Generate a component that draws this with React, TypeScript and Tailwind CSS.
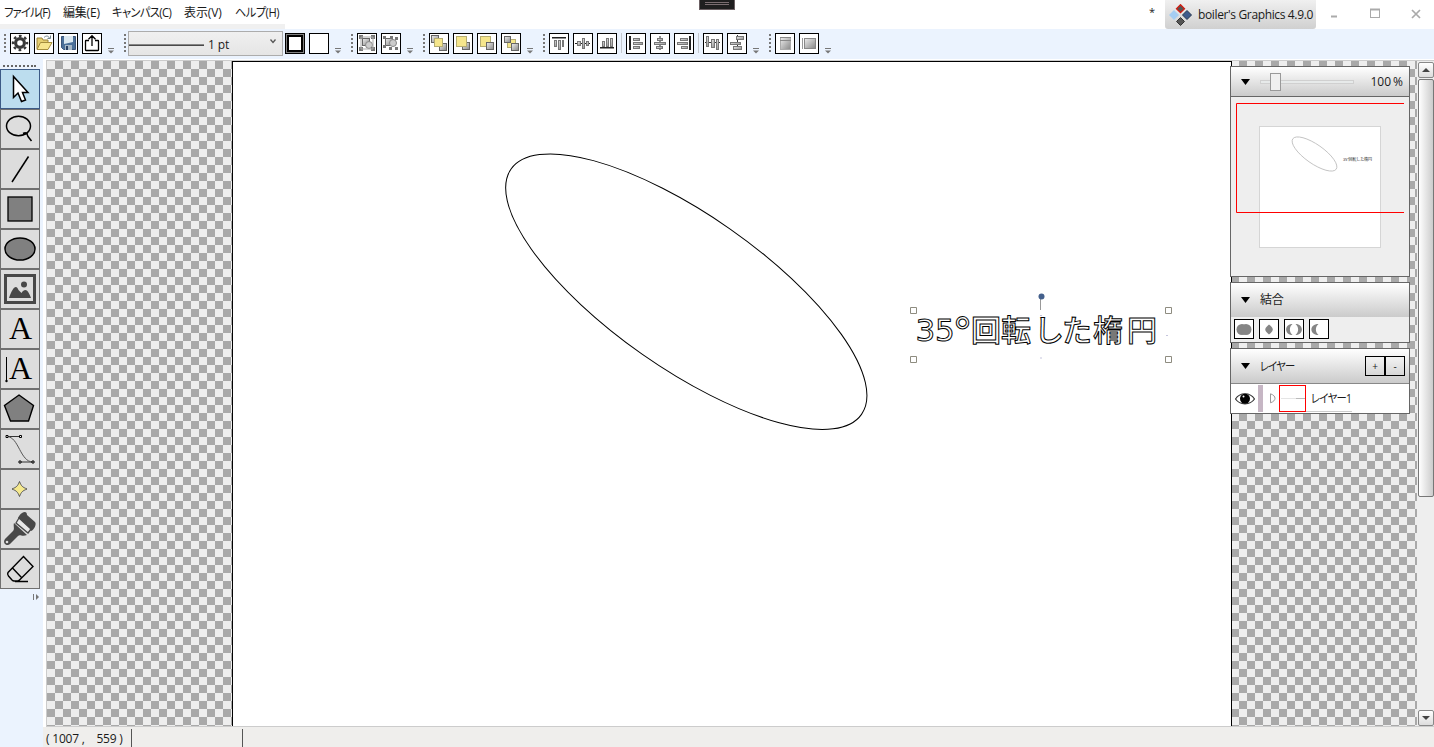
import type { ReactNode } from "react";

const FONT = "font-['Open_Sans','Noto_Sans_CJK_JP',sans-serif]";

function Handle() {
  return (
    <svg width="2" height="18" className="mr-[4px] shrink-0">
      {[0, 4, 8, 12, 16].map((y) => (
        <rect key={y} x="0" y={y} width="2" height="2" fill="#777" />
      ))}
    </svg>
  );
}

function Overflow() {
  return (
    <svg width="6" height="6" className="mt-[15px] ml-[6px] mr-[10px] shrink-0">
      <rect x="0" y="0" width="6" height="1" fill="#777" />
      <path d="M0 2.5h6l-3 3z" fill="#777" />
    </svg>
  );
}

function Btn({ children }: { children?: ReactNode }) {
  return (
    <button className="mr-[4px] flex h-[21px] w-5 shrink-0 items-center justify-center border border-black bg-white last:mr-0">
      <svg width="18" height="18" viewBox="0 0 18 18" className="shrink-0">{children}</svg>
    </button>
  );
}

function Group({ children }: { children: ReactNode }) {
  return (
    <div className="flex items-center">
      <Handle />
      <div className="flex items-center">{children}</div>
      <Overflow />
    </div>
  );
}

function Sep() {
  return <div className="mr-[4px] h-[20px] w-px bg-[#c4c8ce]" />;
}

function Box({ x, y, s = 7, y2 = false }: { x: number; y: number; s?: number; y2?: boolean }) {
  return <rect x={x + 0.5} y={y + 0.5} width={s} height={s} fill={y2 ? "#f5e68c" : "url(#gr)"} stroke={y2 ? "#b5ad72" : "#666"} />;
}

function Bars({ rects }: { rects: number[][] }) {
  return (
    <>
      {rects.map(([x, y, w, h], i) => (
        <rect key={i} x={x + 0.5} y={y + 0.5} width={w} height={h} fill="url(#gr)" stroke="#777" />
      ))}
    </>
  );
}

function TopToolbar() {
  return (
    <div className="flex h-[30px] items-center bg-[#ebf3fe] pb-[2px] pl-[4px]">
      <Group>
        <Btn>
          <g fill="none" stroke="#3a3a3a">
            <circle cx="9" cy="9" r="4.4" strokeWidth="3.2" />
            <circle cx="9" cy="9" r="7" strokeWidth="2.4" strokeDasharray="2.7 2.8" strokeDashoffset="1.35" />
          </g>
        </Btn>
        <Btn>
          <path d="M2 15V4h5l1 2h5v2" fill="#e6cf70" stroke="#9a843a" />
          <path d="M2 15.5l3.5-7H17l-4 7z" fill="#f7e58d" stroke="#a48d3d" />
          <path d="M9 3.5c2-2 4-2 5.5.5M15.500 1.500v3h-3" fill="none" stroke="#70868e" />
        </Btn>
        <Btn>
          <path d="M2.500 2.500h14v13h-12l-2-2z" fill="#4b7099" stroke="#3b557a" />
          <path d="M5 2h9v6l-9 2z" fill="#dbe8f0" />
          <rect x="6" y="11" width="7" height="5" fill="#a6b7c6" />
          <rect x="7" y="12" width="2" height="4" fill="#263f62" />
        </Btn>
        <Btn>
          <path d="M6 6.500H3q-.500 0-.500.500v9q0 .500.500.500h12q.500 0 .500-.500V7q0-.500-.500-.500H12M9 12V2M5.500 5.200L9 1.700l3.500 3.500" fill="none" stroke="#000" strokeWidth="1.300" />
        </Btn>
      </Group>
      <div className="flex items-center">
        <svg width="2" height="18" className="mr-[2px] shrink-0">
          {[0, 4, 8, 12, 16].map((y) => (
            <rect key={y} width="2" height="2" y={y} fill="#777" />
          ))}
        </svg>
        <div className="mr-[2px] flex h-[25px] w-[155px] items-center border border-[#acacac] bg-gradient-to-b from-[#f0f0f0] to-[#e5e5e5]">
          <svg width="75" height="2" className="mt-[4px]"><rect y=".5" width="75" height="1.300" fill="#222" /></svg>
          <span className="ml-[4px] mt-[3px] text-[12px] leading-4 tracking-[-0.100px]">1 pt</span>
          <svg width="6" height="5" className="mb-[3px] ml-auto mr-[6px]"><path d="M.5.500L3 3.500 5.500.500" fill="none" stroke="#555" strokeWidth="1.300" /></svg>
        </div>
        <button className="mr-[4px] flex h-[21px] w-5 items-center justify-center border border-black bg-[#808080] p-px">
          <span className="h-[17px] w-4 border-2 border-black bg-white" />
        </button>
        <Btn />
        <div className="-ml-[4px]"><Overflow /></div>
      </div>
      <Group>
        <Btn>
          <Box x={4} y={4} s={7} /><circle cx="11" cy="11" r="3.500" fill="#ccc" stroke="#888" />
          <path d="M1 1h4v4H1zM13 1h4v4h-4zM1 13h4v4H1zM13 13h4v4h-4z" fill="#777" /><path d="M3 3h12v12H3z" fill="none" stroke="#aaa" />
        </Btn>
        <Btn>
          <Box x={3} y={4} s={7} /><circle cx="11" cy="9" r="3.500" fill="#ccc" stroke="#888" />
          <path d="M1 2h3v3H1zM8 2h3v3H8zM1 11h3v3H1zM13 3h3v3h-3zM7 13h3v3H7zM13 13h3v3h-3z" fill="#777" />
        </Btn>
      </Group>
      <Group>
        <Btn><Box x={1} y={1} s={7} /><Box x={9} y={9} s={7} /><Box x={4} y={4} s={8} y2 /></Btn>
        <Btn><Box x={8} y={8} s={7} /><Box x={2} y={2} s={10} y2 /></Btn>
        <Btn><Box x={2} y={2} s={10} y2 /><Box x={8} y={8} s={7} /></Btn>
        <Btn><Box x={5} y={5} s={8} y2 /><Box x={2} y={2} s={6} /><Box x={9} y={9} s={7} /></Btn>
      </Group>
      <Group>
        <Btn><rect x="2" y="3" width="14" height="1.500" fill="#222" /><Bars rects={[[4, 6, 2, 6], [8, 6, 2, 9], [12, 6, 1, 6]]} /></Btn>
        <Btn><path d="M1 9.500h15" stroke="#222" /><Bars rects={[[3, 7, 3, 4], [8, 4, 2, 10], [12, 7, 2, 4]]} /></Btn>
        <Btn><rect x="2" y="13" width="14" height="1.500" fill="#222" /><Bars rects={[[4, 7, 2, 5], [8, 4, 2, 8], [12, 4, 2, 8]]} /></Btn>
        <Sep />
        <Btn><rect x="2" y="2" width="2" height="14" fill="#222" /><Bars rects={[[6, 4, 6, 2], [6, 8, 9, 2], [6, 12, 6, 2]]} /></Btn>
        <Btn><path d="M9 2v14" stroke="#222" /><Bars rects={[[6, 4, 5, 2], [3, 8, 11, 2], [5, 12, 6, 2]]} /></Btn>
        <Btn><rect x="14" y="2" width="2" height="14" fill="#222" /><Bars rects={[[5, 4, 7, 2], [2, 8, 10, 2], [6, 12, 6, 2]]} /></Btn>
        <Sep />
        <Btn><path d="M1 8.500h15" stroke="#333" /><Bars rects={[[2, 2, 2, 10], [7, 5, 3, 8], [12, 5, 2, 10]]} /></Btn>
        <Btn><path d="M9.500 1v15" stroke="#333" /><Bars rects={[[8, 2, 7, 3], [2, 8, 10, 2], [5, 12, 8, 3]]} /></Btn>
      </Group>
      <Group>
        <Btn><rect x="4.500" y="3.500" width="10" height="12" fill="url(#gr)" stroke="#aaa" /><path d="M4 3.500h11M4 6.500h11" stroke="#888" /></Btn>
        <Btn><rect x="4.500" y="4.500" width="11" height="10" fill="url(#gr)" stroke="#888" /><path d="M2.500 4v11" stroke="#999" /></Btn>
      </Group>
    </div>
  );
}

const tools: ReactNode[] = [
  <path d="M13.500 7.500v21l4.500-4.500 3.500 8.500 4-1.500-3-7.500h5.500z" fill="#fff" stroke="#000" strokeWidth="1.500" />,
  <g fill="none" stroke="#000" strokeWidth="1.500"><ellipse cx="18.500" cy="17" rx="12" ry="9.800" /><path d="M23 24.500c4-2 4 1 5 3l3.500 4.500M23 24.500l5 .500" /></g>,
  <path d="M12 33L28.500 7.500" stroke="#000" strokeWidth="1.500" />,
  <rect x="8" y="8" width="24" height="24" fill="#808080" stroke="#000" strokeWidth="1.300" />,
  <ellipse cx="20" cy="20" rx="15" ry="11" fill="#808080" stroke="#000" strokeWidth="1.500" />,
  <g><rect x="5.500" y="6.500" width="29" height="27" fill="none" stroke="#484848" strokeWidth="3" /><path d="M9 29c3-9 7-15 9.500-8l3 3c4-6 7-2 9.500 5z" fill="#484848" /><circle cx="24" cy="15.500" r="3" fill="#484848" /></g>,
  <text x="20.500" y="30" textAnchor="middle" fontSize="32" fontFamily="Liberation Serif, serif">A</text>,
  <g><text x="20.500" y="30" textAnchor="middle" fontSize="32" fontFamily="Liberation Serif, serif">A</text><path d="M6.500 8v25" stroke="#000" /><circle cx="6.500" cy="32" r="1.200" /></g>,
  <path d="M19 6l14.500 10.500L28.500 32h-18L4.500 16.500z" fill="#808080" stroke="#000" strokeWidth="1.400" />,
  <g fill="none" stroke="#333"><path d="M7 7.500h14M20 33h13" /><path d="M7 7.500C19 8 20 33 33 33" stroke="#555" /><path fill="#fff" stroke="#000" d="M6 6.500h2v2H6zM19.500 6.500h2v2h-2zM19 32h2v2h-2zM32 32h2v2h-2z" /></g>,
  <path d="M19.500 12.500c2 5 3 5.500 7.500 7.500-4.500 2-5.500 2.500-7.500 7.500-2-5-3-5.500-7.500-7.500 4.500-2 5.500-2.500 7.500-7.500z" fill="#f5e98e" stroke="#555" />,
  <g><path d="M22 4c3-2 5-1 5 2l8 7c2 2-1 8-4 9L18 9c1-2 2-4 4-5z" fill="#484848" /><path d="M19 9l12 11-3 4L16 14z" fill="#e8e8e8" stroke="#484848" strokeWidth="1.300" /><path d="M14 14l13 12c-5 2-7-1-9 1l-8 8c-3 3-8-1-5-5l8-8c2-2 0-5 1-8z" fill="#484848" /><circle cx="7" cy="33" r="1.300" fill="#ddd" /></g>,
  <path d="M23.500 7.500L33 17.500 19.500 31q-1 1-2 1H14q-1 0-2-1l-3.500-4q-1.500-2-.500-3.500zM12.500 19l9 9.500M15 32.500h13" fill="none" stroke="#000" strokeWidth="1.400" />,
];

function Toolbox() {
  return (
    <aside className="flex w-[43px] shrink-0 flex-col bg-[#ebf3fe]">
      <svg width="40" height="10" className="shrink-0">
        {[3, 7, 11, 15, 19, 23, 27, 31, 34].map((x) => (
          <rect key={x} x={x} y="6" width="2" height="2" fill="#666" />
        ))}
      </svg>
      {tools.map((t, i) => (
        <button key={i} className={`flex h-10 w-10 shrink-0 items-center justify-center border ${i === 0 ? "border-[#3c5a85] bg-[#bcddee]" : "border-[#707070] bg-[#dddddd]"}`}>
          <svg width="40" height="40" viewBox="0 0 40 40" className="shrink-0">{t}</svg>
        </button>
      ))}
      <svg width="8" height="7" className="ml-[32px] mt-[5px] shrink-0"><path d="M1.500 0v6" stroke="#777" /><path d="M4 0v6l3-3z" fill="#777" /></svg>
    </aside>
  );
}

const glyphs: [string, number][] = [["回", 971], ["転", 1001], ["し", 1034], ["た", 1062], ["楕", 1093], ["円", 1127]];

function Drawing() {
  return (
    <svg width="999" height="664" viewBox="233 62 999 664" className="block">
      <ellipse cx="686.300" cy="291.700" rx="213.900" ry="76.500" transform="rotate(35 686.300 291.700)" fill="none" stroke="#000" />
      <g fill="#fff" stroke="#000" strokeWidth="1" fontSize="30" opacity="0.99">
        <text y="340.500" fontSize="31" fontFamily="DejaVu Sans, sans-serif" x="915.500 935">35</text>
        <text x="952.500" y="347" fontSize="40" fontFamily="DejaVu Sans, sans-serif">°</text>
        {glyphs.map(([c, x]) => (
          <text key={c} x={x} y="340.500" fontFamily="Noto Sans CJK JP, sans-serif" fontWeight="500">{c}</text>
        ))}
      </g>
      <path d="M1040.500 299v11" stroke="#999" />
      <circle cx="1041.500" cy="296.500" r="3" fill="#44608c" />
      <path d="M910.500 307.500h6v6h-6zM1165.500 307.500h6v6h-6zM910.500 356.500h6v6h-6zM1165.500 356.500h6v6h-6z" fill="#fff" stroke="#8e8c80" />
      <path d="M1040 358h2M1166 335.500h2M1040 315.500h2" stroke="#c5c5dd" />
    </svg>
  );
}

function Tri() {
  return <svg width="9" height="6" className="ml-[10px] shrink-0"><path d="M0 0h9L4.500 6z" /></svg>;
}

const header = "flex items-center bg-gradient-to-b from-white to-[#cbcbcb]";

function Panels() {
  return (
    <div className="absolute top-[5px] left-[1183px] flex w-[180px] flex-col gap-[5px] text-[12px]">
      <section className="flex h-[211px] flex-col border border-[#666] bg-[#eee]">
        <div className={`${header} h-[30px] shrink-0 border-b border-[#666]`}>
          <Tri />
          <svg width="96" height="20" className="ml-[10px]">
            <rect x=".5" y="8.500" width="93" height="3" fill="#e7eaea" stroke="#d0d0d0" />
            <rect x="10.500" y="1.500" width="10" height="17" fill="#f0f0f0" stroke="#999" />
          </svg>
          <span className="ml-auto mr-[6px] tracking-[0.100px] [word-spacing:-1.500px]">100 %</span>
        </div>
        <svg width="178" height="179" className="shrink-0">
          <rect x="28.500" y="29.500" width="121" height="121" fill="#fff" stroke="#d5d5d5" />
          <ellipse cx="83.500" cy="57" rx="26.500" ry="9.500" transform="rotate(35 83.500 57)" fill="none" stroke="#bbb" strokeWidth=".8" />
          <text x="112" y="63.500" fontSize="4" fill="#222" textLength="29" fontFamily="Noto Sans CJK JP, sans-serif">35°回転した楕円</text>
          <path d="M173 6.500H5.500v109H173" fill="none" stroke="#f00" />
        </svg>
      </section>
      <section className="flex h-[61px] flex-col border border-[#666] bg-[#eee]">
        <div className={`${header} h-[34px] shrink-0`}><Tri /><span className="ml-[10px] tracking-[-0.300px]">結合</span></div>
        <div className="flex gap-[5px] pt-[2px] pl-[3px]">
          {[0, 1, 2, 3].map((i) => (
            <button key={i} className="h-5 w-5 border border-black bg-white">
              <svg width="18" height="18" fill="#858585">
                {i === 0 && <><circle cx="7" cy="9.500" r="5.500" /><circle cx="11" cy="9.500" r="5.500" /></>}
                {i === 1 && <path d="M9 4.500c5 4 5 6 0 10-5-4-5-6 0-10z" />}
                {i === 2 && <><path d="M7.500 4c-8.500 0-8.500 11 0 11-3.500-3-3.500-8 0-11z" /><path d="M10.500 4c8.500 0 8.500 11 0 11 3.500-3 3.500-8 0-11z" /></>}
                {i === 3 && <path d="M8.500 4c-9.500 0-9.500 11 0 11-3.500-3-3.500-8 0-11z" />}
              </svg>
            </button>
          ))}
        </div>
      </section>
      <section className="flex h-[66px] flex-col border border-[#666] bg-white">
        <div className={`${header} h-[35px] shrink-0 border-b border-[#888]`}>
          <Tri />
          <span className="ml-[10px] mt-[2px] inline-block w-[34px] origin-left scale-x-[0.860] tracking-[-1px] whitespace-nowrap [font-feature-settings:'palt']">レイヤー</span>
          <div className="ml-auto mr-[4px] flex text-[10px]">
            <button className="flex h-5 w-5 items-center justify-center border border-black">+</button>
            <button className="flex h-5 w-5 items-center justify-center border border-black">-</button>
          </div>
        </div>
        <div className="flex h-[29px] items-center">
          <svg width="20" height="14" className="ml-[4px] shrink-0"><path d="M.5 7C5 0 15 0 19.500 7 15 13.500 5 13.500.500 7z" fill="#fff" stroke="#333" strokeWidth="1.200" /><circle cx="10" cy="6.700" r="5" /><circle cx="8.500" cy="4.500" r="1" fill="#fff" /></svg>
          <div className="ml-[3px] h-[27px] w-[5px] bg-[#c6b6c4]" />
          <svg width="6" height="11" className="ml-[7px]"><path d="M.5.800v9c6-2 6-7 0-9z" fill="none" stroke="#999" /></svg>
          <div className="ml-[3px] flex h-[27px] w-[27px] shrink-0 items-center border border-[#f00] bg-white"><div className="ml-[1px] h-px w-[15px] bg-[#e5e5e5]" /><div className="h-px w-[9px] bg-[#bbb]" /></div>
          <div className="flex h-[27px] w-[46px] shrink-0 items-center border-b border-[#ccc] pl-[5px] whitespace-nowrap">
            <span className="mt-[2px] inline-block w-[40px] origin-left scale-x-[0.860] tracking-[-0.800px] [font-feature-settings:'palt']">レイヤー1</span>
          </div>
        </div>
      </section>
    </div>
  );
}

function ScrollButton({ up = false }: { up?: boolean }) {
  return (
    <div className="flex h-4 w-4 items-center justify-center rounded-[2px] border border-[#888] bg-gradient-to-b from-white to-[#ddd]">
      <svg width="8" height="4"><path d={up ? "M0 4h8L4 0z" : "M0 0h8L4 4z"} fill="#444" /></svg>
    </div>
  );
}

export default function App() {
  return (
    <div className={`flex h-[747px] w-[1434px] flex-col overflow-hidden bg-white text-[12px] text-[#1a1a1a] ${FONT}`} lang="ja">
      <svg width="0" height="0" className="absolute">
        <defs><linearGradient id="gr" x2="1" y2="1"><stop stopColor="#eee" /><stop offset="1" stopColor="#888" /></linearGradient></defs>
      </svg>
      <header className="relative flex h-[29px] shrink-0">
        <div className="flex w-[285px] flex-col justify-between">
          <nav className="flex h-6 items-center pt-[1px] pl-[4px] whitespace-nowrap [font-feature-settings:'palt']">
            <span className="w-[59px] origin-left scale-x-[0.940] tracking-[-0.900px]">ファイル(F)</span>
            <span className="w-[49px] tracking-[-0.200px]">編集(E)</span>
            <span className="w-[72px] origin-left scale-x-[0.940] tracking-[-0.700px]">キャンパス(C)</span>
            <span className="w-[51px] tracking-[-0.100px]">表示(V)</span>
            <span className="origin-left scale-x-[0.930] tracking-[-0.500px]">ヘルプ(H)</span>
          </nav>
          <div className="h-[5px] bg-[#f0f0f0]" />
        </div>
        <div className="absolute top-0 left-[699px] flex h-[10px] w-[36px] flex-col items-center gap-px border-x border-b border-[#6b6063] bg-[#1f1f1f] pt-[2px]">
          <div className="h-px w-6 bg-[#7a6d70]" />
          <div className="h-px w-6 bg-[#7a6d70]" />
        </div>
        <span className="ml-auto pt-[4px] pr-[10px] text-[11px]">*</span>
        <div className="flex h-[29px] w-[151px] items-center rounded-b-[3px] bg-gradient-to-b from-[#f0f0f0] to-[#d0d0d0]">
          <svg width="23" height="22" className="ml-[4px] shrink-0">
            <path d="M11.500.700L15.500 4.700 11.500 8.700 7.500 4.700z" fill="#555" stroke="#d21c10" strokeWidth="1.300" />
            <path d="M5 6l5 5-5 5-5-5z" fill="#a5cdf2" />
            <path d="M18 6.500l4.500 4.500-4.500 4.500-4.500-4.500z" fill="#3e5b8c" stroke="#26364e" />
            <path d="M11.500 13.500l4 4-4 4-4-4z" fill="#555" stroke="#333" />
          </svg>
          <span className="ml-[6px] whitespace-nowrap tracking-[-0.360px]">boiler's Graphics 4.9.0</span>
        </div>
        <svg width="118" height="28" className="shrink-0" fill="none" stroke="#aaa">
          <path d="M15 16.500h6" strokeWidth="2" /><rect x="54.500" y="9.500" width="9" height="8" /><path d="M54 9.500h10" strokeWidth="2" /><path d="M96 10l8 8M104 10l-8 8" strokeWidth="1.700" />
        </svg>
      </header>
      <TopToolbar />
      <div className="flex min-h-0 flex-1">
        <Toolbox />
        <div className="flex min-w-0 flex-1 flex-col">
          <div className="relative ml-[3px] mt-[1px] flex h-[667px] shrink-0 border-t border-l border-b border-[#ccc] bg-[#eee]">
            <div className="flex w-[1370px] bg-[repeating-conic-gradient(#a9a9a9_0_25%,#eee_0_50%)] bg-[length:16px_16px] pl-[185px]">
              <div className="w-[1000px] overflow-hidden border-t border-r border-l border-black bg-white"><Drawing /></div>
            </div>
            <div className="ml-px flex w-4 flex-col">
              <div className="pt-[1px]"><ScrollButton up /></div>
              <div className="mt-[1px] h-[418px] rounded-[2px] border border-[#777] bg-gradient-to-r from-white to-[#ccc]" />
              <div className="mt-auto"><ScrollButton /></div>
            </div>
            <Panels />
          </div>
          <footer className="flex flex-1 bg-[#efeeec] pt-[2px]">
            <div className="w-[88px] pt-px pl-[3px] leading-[18px] tracking-[-0.200px] whitespace-pre">( 1007 ,    559 )</div>
            <div className="w-[111px] border-l border-[#555]" />
            <div className="border-l border-[#555]" />
          </footer>
        </div>
      </div>
    </div>
  );
}
